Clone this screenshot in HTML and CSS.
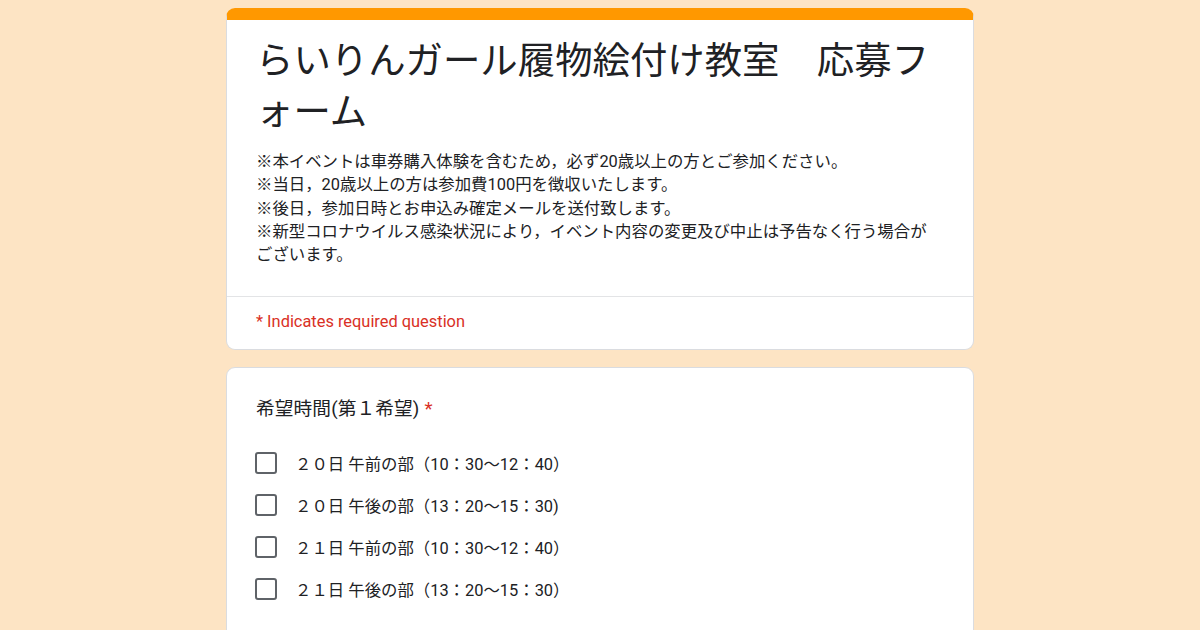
FILE: index.html
```html
<!DOCTYPE html>
<html lang="ja">
<head>
<meta charset="utf-8">
<title>らいりんガール履物絵付け教室　応募フォーム</title>
<link rel="stylesheet" href="styles.css">
</head>
<body>
<main class="page">
  <section class="card header-card">
    <div class="header-main">
      <h1 class="form-title">らいりんガール履物絵付け教室　応募フォーム</h1>
      <div class="form-desc">
        <p>※本イベントは車券購入体験を含むため，必ず20歳以上の方とご参加ください。</p>
        <p>※当日，20歳以上の方は参加費100円を徴収いたします。</p>
        <p>※後日，参加日時とお申込み確定メールを送付致します。</p>
        <p>※新型コロナウイルス感染状況により，イベント内容の変更及び中止は予告なく行う場合がございます。</p>
      </div>
    </div>
    <div class="required-note">* Indicates required question</div>
  </section>

  <section class="card question-card">
    <div class="q-title">希望時間(第１希望)<span class="req">*</span></div>
    <ul class="options">
      <li class="option"><span class="box"></span><span class="opt-text">２０日 午前の部（10：30〜12：40）</span></li>
      <li class="option"><span class="box"></span><span class="opt-text">２０日 午後の部（13：20〜15：30)</span></li>
      <li class="option"><span class="box"></span><span class="opt-text">２１日 午前の部（10：30〜12：40）</span></li>
      <li class="option"><span class="box"></span><span class="opt-text">２１日 午後の部（13：20〜15：30）</span></li>
    </ul>
  </section>
</main>
</body>
</html>
```

FILE: styles.css
```css
* { box-sizing: border-box; }

html, body {
  margin: 0;
  padding: 0;
  height: 100%;
}

body {
  background: #fde4c4;
  font-family: Roboto, "Noto Sans CJK JP", sans-serif;
  color: #202124;
  overflow: hidden;
}

.page {
  width: 748px;
  margin: 0 auto;
  padding-top: 8px;
  display: flex;
  flex-direction: column;
  gap: 17px;
}

.card {
  background: #ffffff;
  border: 1px solid #dadce0;
  border-radius: 9px;
}

.header-card {
  border-top: 12px solid #ff9800;
}

.header-main {
  padding: 16px 29px 30px;
  border-bottom: 1px solid #e3e4e6;
}

.form-title {
  margin: 0;
  font-weight: 400;
  font-size: 37.4px;
  line-height: 51px;
  color: #202124;
}

.form-desc {
  margin-top: 12px;
  max-width: 680px;
  font-size: 16.4px;
  line-height: 23.3px;
}

.form-desc p {
  margin: 0;
}

.required-note {
  padding: 0 29px 3px;
  height: 52px;
  display: flex;
  align-items: center;
  font-size: 16.4px;
  color: #d93025;
}

.question-card {
  padding: 27px 29px 40px;
  height: 300px;
}

.q-title {
  font-size: 18.7px;
  line-height: 28px;
  letter-spacing: 0.1px;
}

.req {
  color: #d93025;
  margin-left: 5px;
}

.options {
  list-style: none;
  margin: 19px 0 0;
  padding: 0;
  display: flex;
  flex-direction: column;
}

.option {
  height: 42px;
  display: flex;
  align-items: center;
}

.box {
  width: 22px;
  height: 22px;
  border: 2.3px solid #5f6368;
  border-radius: 3px;
  flex: none;
  margin-left: -1px;
}

.opt-text {
  margin-left: 18px;
  font-size: 16.4px;
  color: #202124;
}
```
